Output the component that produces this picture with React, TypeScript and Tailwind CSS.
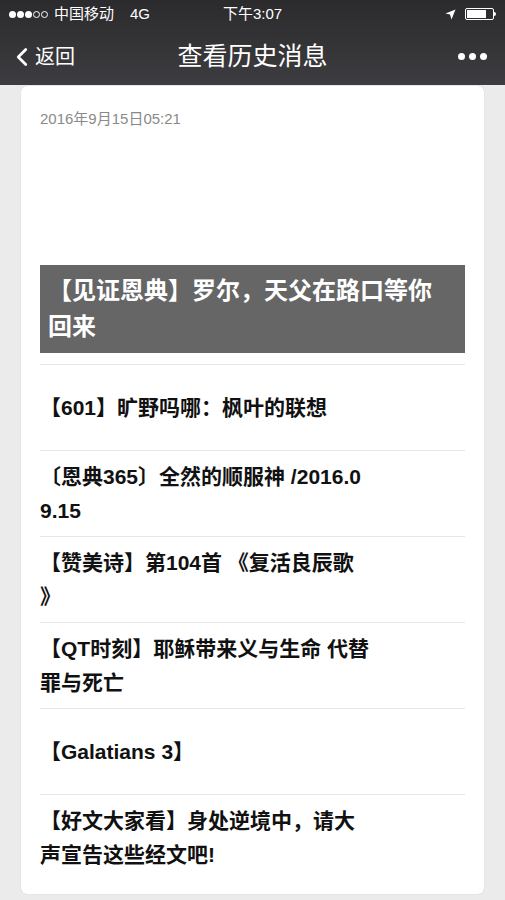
import { ChevronLeft } from 'lucide-react'

// line breaks follow the original list's wrapping
const items = [
    ['【601】旷野吗哪：枫叶的联想'],
    ['〔恩典365〕全然的顺服神 /2016.0', '9.15'],
    ['【赞美诗】第104首 《复活良辰歌', '》'],
    ['【QT时刻】耶稣带来义与生命 代替', '罪与死亡'],
    ['【Galatians 3】'],
    ['【好文大家看】身处逆境中，请大', '声宣告这些经文吧!'],
]

const font = { fontFamily: '"Liberation Sans", "Noto Sans CJK SC", sans-serif' }

function StatusBar() {
    return (
        <div className="relative flex h-7 items-center justify-between px-[9px] text-[15px] text-white">
            <div className="flex items-center gap-[6px]">
                <span className="flex items-center gap-[1px]">
                    {[0, 1, 2].map(i => <span key={i} className="h-[7px] w-[7px] rounded-full bg-white" />)}
                    {[0, 1].map(i => <span key={i} className="h-[7px] w-[7px] rounded-full border border-white" />)}
                </span>
                <span>中国移动</span>
                <span className="ml-[10px]">4G</span>
            </div>
            <span className="absolute left-1/2 -translate-x-1/2">下午3:07</span>
            <div className="flex items-center gap-[9px]">
                <svg width="11" height="11" viewBox="0 0 11 11">
                    <path d="M10.5 0.5 L0.5 4.5 L5 5.5 L6.5 10.5 Z" fill="white" />
                </svg>
                <div className="flex items-center">
                    <div className="flex h-[12px] w-[29px] items-center rounded-[2px] border border-white p-[1px]">
                        <div className="h-full w-[19px] bg-white" />
                    </div>
                    <div className="h-[4px] w-[2px] rounded-r-sm bg-white" />
                </div>
            </div>
        </div>
    )
}

function NavBar() {
    return (
        <div className="relative flex h-[57px] items-center justify-between px-3 text-white">
            <div className="flex items-center">
                <ChevronLeft size={30} strokeWidth={2.2} className="-ml-[5px] -mr-[2px]" />
                <span className="text-[20px]">返回</span>
            </div>
            <span className="absolute left-1/2 -translate-x-1/2 text-[25px]">查看历史消息</span>
            <div className="mr-[6px] flex items-center gap-[4px]">
                {[0, 1, 2].map(i => <span key={i} className="h-[7px] w-[7px] rounded-full bg-white" />)}
            </div>
        </div>
    )
}

export default function App() {
    return (
        <div className="min-h-[900px] w-[505px] bg-[#ebebeb]" style={font}>
            <div className="bg-gradient-to-b from-[#2b2b2d] to-[#3d3d41]">
                <StatusBar />
                <NavBar />
            </div>
            <div className="px-[21px] pb-2 pt-[1px]">
                <div className="rounded-md bg-white px-[19px] pb-[14px] pt-[23px] shadow-[0_0_1px_rgba(0,0,0,0.2)]">
                    <p className="text-[15px] leading-5 text-[#8a8a8a]">2016年9月15日05:21</p>
                    <div className="h-[136px]" />
                    <div className="bg-[#666666] py-2 pl-2 pr-6">
                        <p className="text-[24px] font-bold leading-9 text-white">【见证恩典】罗尔，天父在路口等你<br />回来</p>
                    </div>
                    <div className="mt-[11px]">
                        {items.map(lines => (
                            <div key={lines[0]} className="flex h-[86px] items-center border-t border-[#e6e6e6]">
                                <p className="text-[21px] font-bold leading-[34px] text-[#111]">
                                    {lines.map((l, i) => <span key={i} className="block whitespace-pre">{l}</span>)}
                                </p>
                            </div>
                        ))}
                    </div>
                </div>
            </div>
        </div>
    )
}
